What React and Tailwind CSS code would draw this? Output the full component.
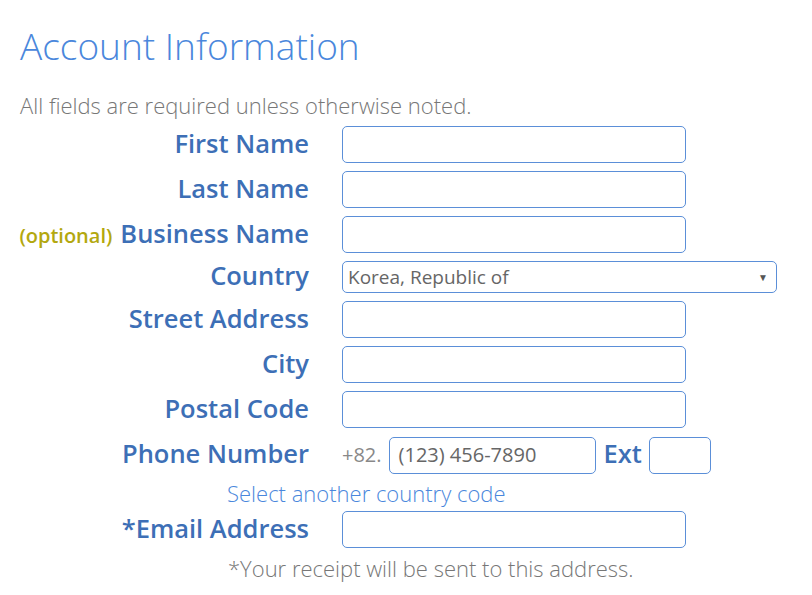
export default function App() {
  const font = { fontFamily: '"Open Sans", sans-serif' };
  const Label = ({ children }) => (
    <div className="flex w-[289px] shrink-0 -translate-y-[1px] items-baseline justify-end whitespace-nowrap text-[25.5px] font-semibold leading-none text-[#3d6fb6]">
      {children}
    </div>
  );
  const Input = ({ w = "w-[344px]", h = "h-[37px]" }) => (
    <div className={`${w} ${h} rounded-[5px] border-[1.5px] border-[#5b8fd8] bg-white`} />
  );
  return (
    <div className="w-[812px] h-[595px] bg-white pl-[20px]" style={font}>
      <h1 className="pt-[24px] text-[37px] font-light leading-[44px] text-[#4a87dc]">Account Information</h1>
      <p className="mt-[25px] text-[22px] font-light leading-[24px] text-[#777]">
        All fields are required unless otherwise noted.
      </p>
      <div className="mt-[9px] flex flex-col">
        <div className="flex items-center gap-[33px]">
          <Label>First Name</Label>
          <Input />
        </div>
        <div className="mt-[8px] flex items-center gap-[33px]">
          <Label>Last Name</Label>
          <Input />
        </div>
        <div className="mt-[8px] flex items-center gap-[33px]">
          <Label>
            <span className="mr-[8px] text-[20px] text-[#b3a80f]">(optional)</span>
            <span>Business Name</span>
          </Label>
          <Input />
        </div>
        <div className="mt-[8px] flex items-center gap-[33px]">
          <Label>Country</Label>
          <div className="flex h-[32px] w-[435px] items-center justify-between rounded-[5px] border-[1.5px] border-[#5b8fd8] pl-[5px] pr-[8px] text-[19px] text-[#666]">
            <span>Korea, Republic of</span>
            <span className="text-[10px] text-[#555]">▼</span>
          </div>
        </div>
        <div className="mt-[8px] flex items-center gap-[33px]">
          <Label>Street Address</Label>
          <Input />
        </div>
        <div className="mt-[8px] flex items-center gap-[33px]">
          <Label>City</Label>
          <Input />
        </div>
        <div className="mt-[8px] flex items-center gap-[33px]">
          <Label>Postal Code</Label>
          <Input />
        </div>
        <div className="mt-[8px] flex items-center gap-[33px]">
          <Label>Phone Number</Label>
          <div className="flex items-center">
            <span className="text-[20px] text-[#888]">+82.</span>
            <div className="ml-[7px] flex h-[37px] w-[207px] items-center rounded-[5px] border-[1.5px] border-[#5b8fd8] pl-[9px] text-[20px] text-[#666]">
              (123) 456-7890
            </div>
            <span className="ml-[8px] -translate-y-[2px] text-[25.5px] font-semibold text-[#3d6fb6]">Ext</span>
            <div className="ml-[7px] h-[37px] w-[62px] rounded-[5px] border-[1.5px] border-[#5b8fd8]" />
          </div>
        </div>
        <div className="mt-[7px] pl-[207px] text-[22px] font-light leading-[24px] text-[#4a87dc]">
          Select another country code
        </div>
        <div className="mt-[6px] flex items-center gap-[33px]">
          <Label>*Email Address</Label>
          <Input />
        </div>
        <div className="mt-[7px] pl-[208px] text-[22px] font-light leading-[26px] text-[#777]">
          *Your receipt will be sent to this address.
        </div>
      </div>
    </div>
  );
}
